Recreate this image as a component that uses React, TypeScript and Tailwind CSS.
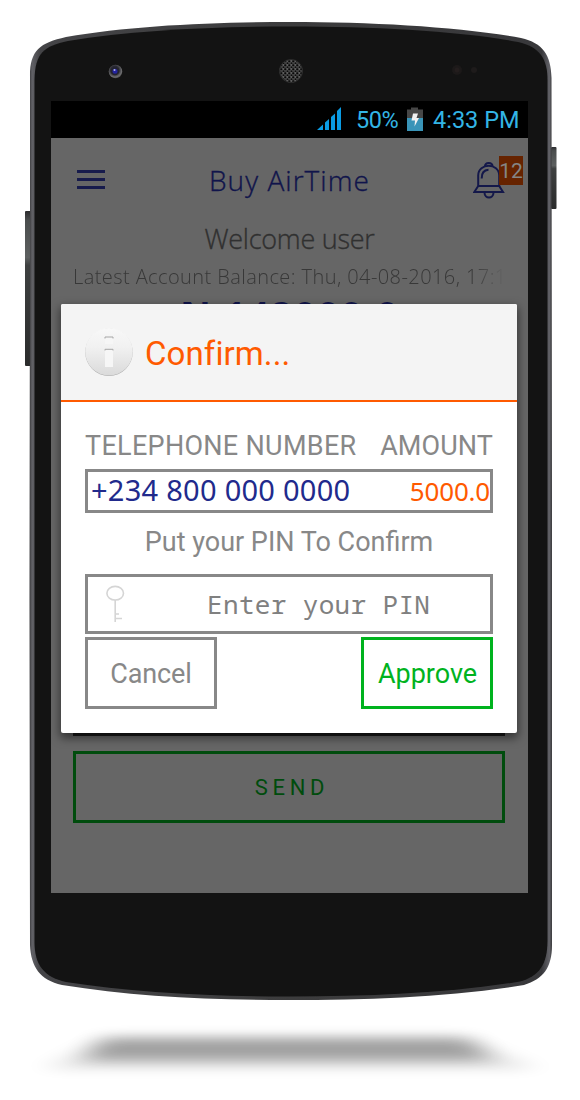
import React from 'react';

const BODY =
  'M30 212 L30 76 C30 50 40 43 66 37 C130 26 210 22 290 22 C375 22 460 27 521 38 C543 43 551 55 551.500 78 L552 500 L552 945 C552 968 543 979 524 985 C450 997 370 1000 288 1000 C205 1000 130 996 62 985 C40 980 31 967 30 945 L29.500 600 Z';

const INNER =
  'M34.5 212 L34.5 80 C35 53 44 46 68 41 C132 30.500 210 26.500 290 26.500 C375 26.500 460 31 518 42 C540 47 547.5 59 547.5 80 L547.5 940 C547.500 965 539 976 520 981.500 C450 993 370 996.500 288 996.500 C205 996.500 130 992 66 982 C44 977 34.500 965 34.500 942 Z';

function PhoneBody() {
  return (
    <svg className="absolute inset-0" width="580" height="1100" viewBox="0 0 580 1100" aria-hidden="true">
      <defs>
        <linearGradient id="rim" x1="0" x2="1" y1="0" y2="0">
          <stop offset="0" stopColor="#3a3a3d" />
          <stop offset="0.005" stopColor="#616166" />
          <stop offset="0.02" stopColor="#444447" />
          <stop offset="0.5" stopColor="#3c3c3d" />
          <stop offset="0.98" stopColor="#38383b" />
          <stop offset="0.995" stopColor="#626268" />
          <stop offset="1" stopColor="#3a3a3c" />
        </linearGradient>
        <linearGradient id="key" x1="0" x2="0" y1="0" y2="1">
          <stop offset="0" stopColor="#2c2c2e" />
          <stop offset="0.06" stopColor="#4a4d4d" />
          <stop offset="0.3" stopColor="#5d6060" />
          <stop offset="0.35" stopColor="#3e4040" />
          <stop offset="1" stopColor="#2a2b2b" />
        </linearGradient>
        <radialGradient id="lens" cx="0.45" cy="0.4" r="0.6">
          <stop offset="0" stopColor="#2a2a70" />
          <stop offset="0.5" stopColor="#2b2b32" />
          <stop offset="0.85" stopColor="#6e6e70" />
          <stop offset="1" stopColor="#4a4a4a" />
        </radialGradient>
        <pattern id="mesh" width="4" height="4" patternUnits="userSpaceOnUse">
          <rect width="4" height="4" fill="#5c5c5c" />
          <rect x="0.200" y="0.200" width="2.200" height="2" rx="0.500" fill="#080808" />
          <rect x="2.500" y="2.200" width="1.500" height="1.800" rx="0.500" fill="#080808" />
          <rect x="0.300" y="2.600" width="1.200" height="1.300" fill="#1c1c1c" />
        </pattern>
        <filter id="soft" x="-20%" y="-100%" width="140%" height="300%">
          <feGaussianBlur stdDeviation="14 6" />
        </filter>
        <filter id="wide" x="-20%" y="-100%" width="140%" height="300%">
          <feGaussianBlur stdDeviation="15 6" />
        </filter>
        <clipPath id="floor">
          <rect x="0" y="1000" width="580" height="80" />
        </clipPath>
      </defs>
      <g clipPath="url(#floor)">
        <path d="M100 1040 H470 L535 1069 H47 Z" fill="#000" opacity="0.11" filter="url(#wide)" />
        <path d="M104 1037 H468 L492 1060 H84 Z" fill="#000" opacity="0.29" filter="url(#soft)" />
      </g>
      <rect x="25" y="211" width="6" height="155" rx="1" fill="url(#key)" />
      <rect x="551" y="147" width="5.500" height="62" rx="1" fill="url(#key)" />
      <path d={BODY} fill="url(#rim)" />
      <path d={INNER} fill="#131313" />
      <circle cx="115.500" cy="71.500" r="6.800" fill="url(#lens)" />
      <circle cx="115" cy="71" r="4.300" fill="#24242f" />
      <circle cx="115" cy="71.300" r="2.500" fill="#2323a0" />
      <circle cx="114.500" cy="70" r="1" fill="#b8b8e8" />
      <circle cx="291" cy="71" r="11.500" fill="url(#mesh)" />
      <circle cx="291" cy="71" r="11.500" fill="none" stroke="#2c2c2c" />
      <circle cx="457" cy="70" r="5" fill="#1c1919" />
      <circle cx="457" cy="70" r="2.500" fill="#231d1d" />
      <circle cx="474" cy="70" r="3" fill="#1e1b1b" />
    </svg>
  );
}

function StatusBar() {
  return (
    <div className="flex h-[37px] shrink-0 items-center bg-black pl-[266px] text-[24px] leading-none text-[#33b5e5]">
      <svg className="-mt-[3px] shrink-0" width="24" height="24" viewBox="0 0 24 24" aria-hidden="true">
        <g fill="#0a9be3">
          <path d="M0 24 L6 18.500 V24 Z" />
          <path d="M8 24 V16.500 L12 13 V24 Z" />
          <path d="M14 24 V11 L18 7.500 V24 Z" />
          <path d="M20 24 V5 L24 1 V24 Z" />
        </g>
      </svg>
      <span className="ml-[15px] mt-[2px] w-[51px] whitespace-nowrap text-[23.500px] tracking-[-0.4px]">50%</span>
      <svg className="-mt-[1px] shrink-0" width="16" height="24" viewBox="0 0 16 24" aria-hidden="true">
        <path d="M4 0.500 H11 V2.500 H16 V12 H0 V2.500 H4 Z" fill="#474747" />
        <path d="M0 11 H16 V24 H0 Z" fill="#3994b8" />
        <path d="M6 6.500 H11 L9.500 11 H12 L7.500 19.500 L8 13.500 H4.500 Z" fill="#f1f1f1" />
      </svg>
      <span className="ml-[10px] mt-[2px] whitespace-nowrap text-[23.500px]">4:33 PM</span>
    </div>
  );
}

function Bell() {
  return (
    <svg width="32" height="38" viewBox="0 0 32 38" fill="none" stroke="#14184a" strokeWidth="2" aria-hidden="true">
      <path d="M12 5.500 C12 0.800 19.500 0.800 19.500 5.500" />
      <path d="M5.200 25 V14.500 C5.200 1.500 26.200 1.500 26.200 14.500 V25 Z" />
      <path d="M5.200 25 L1.300 31 H30 L26.200 25" />
      <path d="M11.500 31.500 C11.500 38 20.500 38 20.500 31.500" />
      <path d="M8.700 17.500 C8.500 11.500 11 9 15.500 8.700" />
    </svg>
  );
}

function Page() {
  return (
    <div className="flex min-h-0 flex-1 flex-col bg-[#666]">
      <header className="flex h-[84px] shrink-0 items-center pl-[26px]">
        <div className="mt-[-1px] flex w-[28px] flex-col gap-[5px]">
          <span className="h-[3px] bg-[#171b4c]" />
          <span className="h-[3px] bg-[#171b4c]" />
          <span className="h-[3px] bg-[#171b4c]" />
        </div>
        <h1 className="ml-[104px] w-[214px] whitespace-nowrap font-['Open_Sans','Noto_Sans',sans-serif] text-[28px] leading-[36px] font-light tracking-[1.05px] text-[#10144b] [-webkit-text-stroke:0.35px_#10144b]">
          Buy AirTime
        </h1>
        <div className="relative ml-[50px]">
          <Bell />
          <span className="absolute left-[26px] top-[-5px] flex h-[29px] w-[24px] items-center justify-center bg-[#662300] pt-[2px] text-[21px] leading-none text-[#858585]">
            12
          </span>
        </div>
      </header>
      <p className="h-[32px] shrink-0 text-center font-['Open_Sans','Noto_Sans',sans-serif] text-[27px] leading-[33px] font-light tracking-[-0.25px] text-[#303030] [-webkit-text-stroke:0.35px_#303030]">
        Welcome user
      </p>
      <p className="mx-[22px] h-[44px] shrink-0 overflow-hidden whitespace-nowrap font-['Open_Sans','Noto_Sans',sans-serif] text-[20px] leading-[45px] font-light tracking-[0.42px] text-[#383838] [mask-image:linear-gradient(to_right,black_92%,transparent_100%)]">
        Latest Account Balance: Thu, 04-08-2016, 17:1
      </p>
      <p className="h-[36px] shrink-0 whitespace-nowrap pl-[129px] font-['Open_Sans','Noto_Sans',sans-serif] text-[38px] leading-[32px] font-bold tracking-[1.6px] text-[#10144b]">
        N 142000.0
      </p>
      <div className="ml-[22px] mr-[23px] mt-[396px] h-[6px] shrink-0 bg-[#1b1b1b]" />
      <button className="ml-[22px] mr-[23px] mt-[15px] h-[72px] shrink-0 border-[3px] border-[#004c0d] pl-[6px] pt-[2px] text-[22px] leading-none tracking-[4.7px] text-[#004c0d]">
        SEND
      </button>
    </div>
  );
}

function InfoBadge() {
  return (
    <svg width="50" height="50" viewBox="0 0 50 50" aria-hidden="true">
      <defs>
        <linearGradient id="disc" x1="0" x2="0" y1="0" y2="1">
          <stop offset="0" stopColor="#f8f8f8" />
          <stop offset="0.4" stopColor="#f1f1f1" />
          <stop offset="1" stopColor="#dadada" />
        </linearGradient>
      </defs>
      <circle cx="25" cy="25.300" r="23.700" fill="#aaa" />
      <circle cx="25" cy="24.700" r="23.800" fill="url(#disc)" />
      <rect x="21" y="10" width="8" height="7" fill="#f6f6f6" />
      <path d="M21 11.500 V10 H29 V11.500" fill="none" stroke="#a6a6a6" />
      <rect x="21" y="22" width="8" height="18" fill="#f6f6f6" />
      <path d="M21 23.500 V22.300 H29 V23.500" fill="none" stroke="#a6a6a6" />
    </svg>
  );
}

function ConfirmDialog() {
  return (
    <section className="absolute left-[10px] top-[203px] flex h-[429px] w-[456px] flex-col rounded-[2px] bg-white shadow-[0_4px_10px_1px_rgba(0,0,0,0.5)]">
      <header className="flex h-[98px] shrink-0 items-center rounded-t-[2px] border-b-2 border-[#ff5a00] bg-[#f4f4f4] pl-[23px]">
        <InfoBadge />
        <h2 className="ml-[11px] mt-[3px] text-[33px] leading-[40px] tracking-[0.1px] text-[#ff5a00]">Confirm...</h2>
      </header>
      <div className="flex flex-col px-[24px] pt-[26px] text-[27px] text-[#888]">
        <div className="flex h-[36px] justify-between whitespace-nowrap leading-[36px]">
          <span className="tracking-[0.3px]">TELEPHONE NUMBER</span>
          <span className="tracking-[0.1px]">AMOUNT</span>
        </div>
        <div className="mt-[5px] flex h-[44px] items-center justify-between whitespace-nowrap border-[3px] border-[#888] pl-[3px] font-['Noto_Sans','Open_Sans',sans-serif]">
          <span className="text-[29px] leading-[38px] tracking-[0.27px] text-[#212a8c] mt-[-2px]">+234 800 000 0000</span>
          <span className="text-[26px] leading-[38px] tracking-[-0.2px] text-[#ff5a00]">5000.0</span>
        </div>
        <p className="mt-[11px] h-[36px] text-center leading-[36px]">Put your PIN To Confirm</p>
        <div className="mt-[14px] flex h-[60px] items-center border-[3px] border-[#888] pl-[18px]">
          <svg width="19" height="38" viewBox="0 0 19 38" fill="none" stroke="#d5d5d5" strokeWidth="1.600" aria-hidden="true">
            <ellipse cx="9.200" cy="8.200" rx="8.300" ry="6.800" />
            <path d="M9.200 15 V37 M9.200 29 H13 M9.200 33.500 H16" />
          </svg>
          <span className="ml-[82px] whitespace-nowrap font-['Noto_Sans_Mono','DejaVu_Sans_Mono',monospace] text-[26px] leading-[40px] tracking-[0.35px] text-[#808080]">
            Enter your PIN
          </span>
        </div>
        <div className="mt-[3px] flex justify-between">
          <button className="h-[72px] w-[132px] border-[3px] border-[#888] pt-[2px] tracking-[-0.1px]">Cancel</button>
          <button className="h-[72px] w-[132px] border-[3px] border-[#00b31e] pl-[1px] pt-[2px] text-[#00b31e]">Approve</button>
        </div>
      </div>
    </section>
  );
}

export default function App() {
  return (
    <main className="relative h-[1100px] w-[580px] overflow-hidden bg-white pl-[51px] pt-[101px] font-[Roboto,sans-serif]">
      <PhoneBody />
      <div className="relative flex h-[792px] w-[477px] flex-col overflow-hidden">
        <StatusBar />
        <Page />
        <ConfirmDialog />
      </div>
    </main>
  );
}
